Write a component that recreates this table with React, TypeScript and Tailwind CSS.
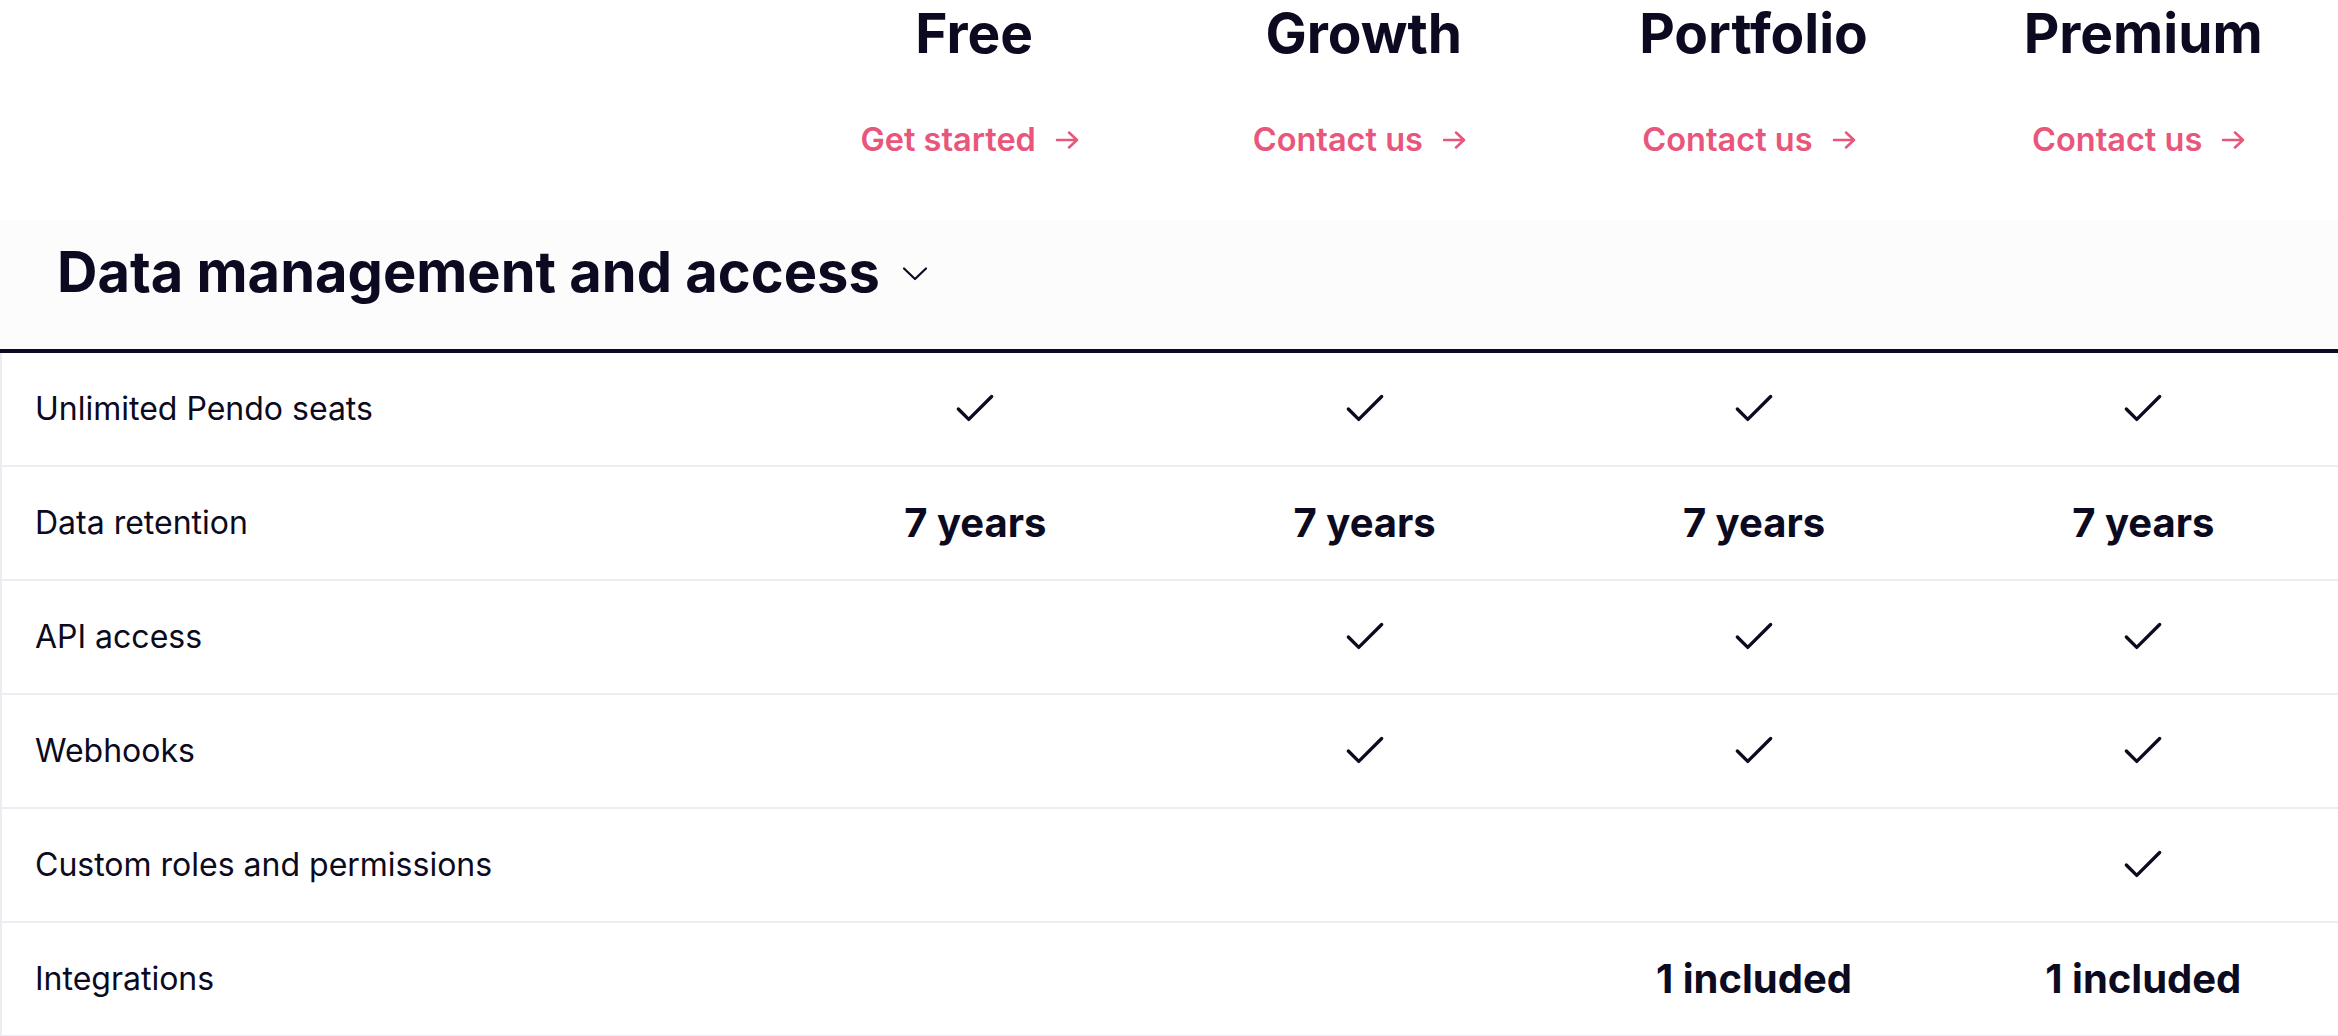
import { Check } from "lucide-react";

type Cell = boolean | string | null;

const plans = [
  { name: "Free", cta: "Get started" },
  { name: "Growth", cta: "Contact us" },
  { name: "Portfolio", cta: "Contact us" },
  { name: "Premium", cta: "Contact us" },
];

const rows: { label: string; cells: Cell[] }[] = [
  { label: "Unlimited Pendo seats", cells: [true, true, true, true] },
  { label: "Data retention", cells: ["7 years", "7 years", "7 years", "7 years"] },
  { label: "API access", cells: [null, true, true, true] },
  { label: "Webhooks", cells: [null, true, true, true] },
  { label: "Custom roles and permissions", cells: [null, null, null, true] },
  { label: "Integrations", cells: [null, null, "1 included", "1 included"] },
];

function Arrow() {
  return (
    <svg width="24" height="18" viewBox="0 0 24 18" fill="none" stroke="currentColor" strokeWidth="2.5" strokeLinecap="round" strokeLinejoin="round">
      <path d="M2 9h20M14 1.5 22 9l-8 7.5" />
    </svg>
  );
}

function Chevron() {
  return (
    <svg width="26" height="15" viewBox="0 0 26 15" fill="none" stroke="currentColor" strokeWidth="2.2" strokeLinecap="round" strokeLinejoin="round">
      <path d="M2 2.5 13 13 24 2.5" />
    </svg>
  );
}

function Value({ cell }: { cell: Cell }) {
  if (cell === true) return <Check size={50} strokeWidth={1.6} className="text-[#0c0a20]" />;
  if (typeof cell === "string")
    return <span className="text-[40px] font-bold leading-none text-[#0c0a20]">{cell}</span>;
  return null;
}

export default function App() {
  return (
    <div className="min-h-screen bg-white font-['Inter','Liberation_Sans',sans-serif] text-[#0c0a20]">
      <div className="grid grid-cols-6">
        <div className="col-span-2" />
        {plans.map((p) => (
          <div key={p.name} className="flex flex-col items-center pt-[6px]">
            <h2 className="text-[55px] font-bold leading-none">{p.name}</h2>
            <a href="#" className="mr-[9px] mt-[63px] flex items-center gap-[19px] text-[32.5px] font-semibold leading-none text-[#e9567b]">
              {p.cta}
              <Arrow />
            </a>
          </div>
        ))}
      </div>

      <div className="mt-[63px] flex items-center gap-[22px] bg-[#fcfcfc] pb-[49px] pl-[57px] pt-[24px]">
        <h3 className="text-[56px] font-bold leading-none">Data management and access</h3>
        <span className="mt-1">
          <Chevron />
        </span>
      </div>

      <div className="border-t-4 border-[#0c0a20]">
        <div className="border-l-2 border-[#ececf2]">
          {rows.map((r) => (
            <div key={r.label} className="grid h-[114px] grid-cols-6 items-center border-b-2 border-[#ececf2]">
              <div className="col-span-2 pl-[33px] text-[32px] leading-none">{r.label}</div>
              {r.cells.map((c, i) => (
                <div key={i} className="flex items-center justify-center">
                  <Value cell={c} />
                </div>
              ))}
            </div>
          ))}
        </div>
      </div>
    </div>
  );
}
